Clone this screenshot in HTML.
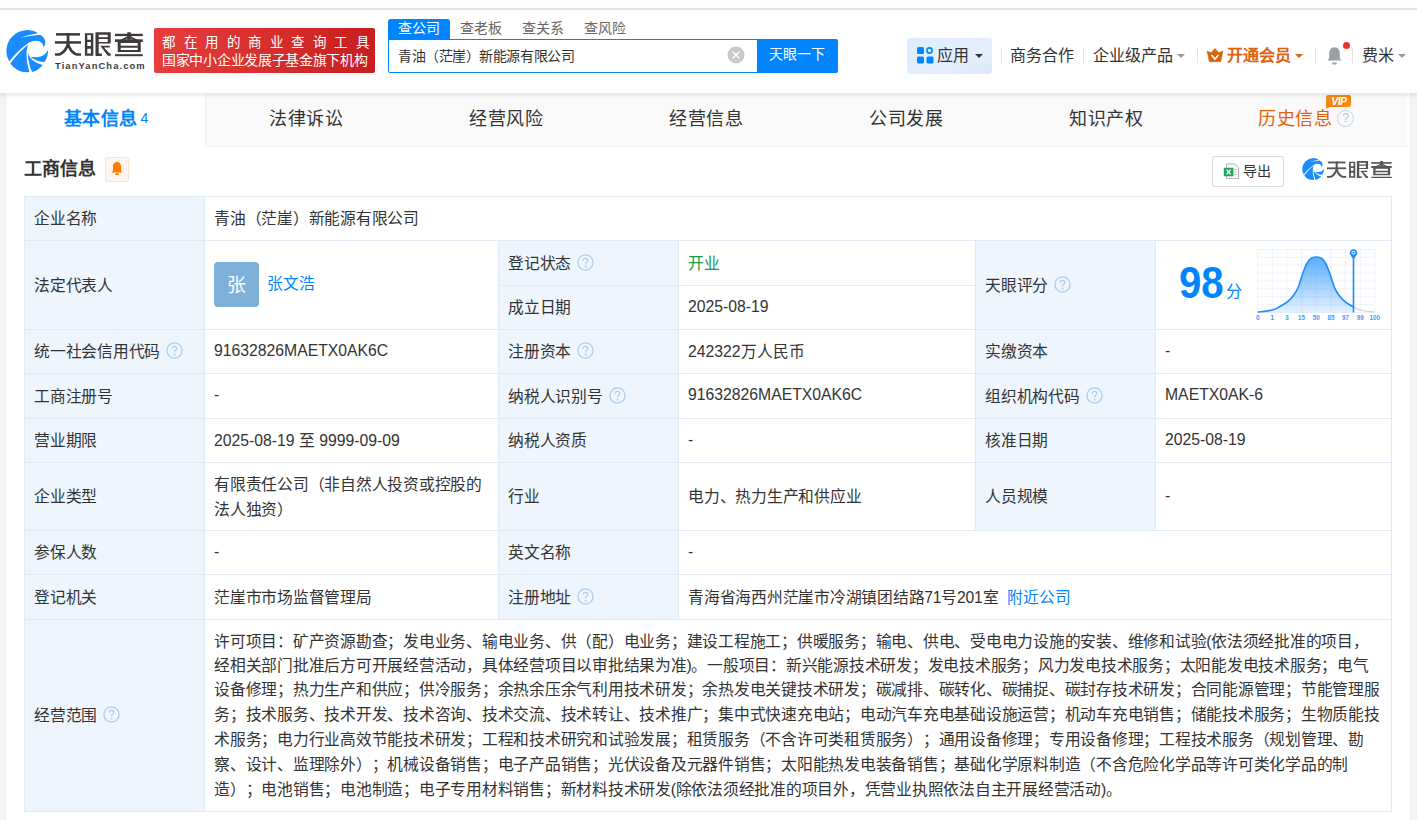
<!DOCTYPE html>
<html lang="zh-CN"><head><meta charset="utf-8">
<style>
*{margin:0;padding:0;box-sizing:border-box}
html,body{text-spacing-trim:space-all;width:1417px;height:820px;overflow:hidden;background:#f5f5f5;font-family:"Liberation Sans",sans-serif;color:#333}
.a{position:absolute;white-space:nowrap}
#top{position:absolute;left:0;top:0;width:1417px;height:8px;background:#fdfdfd}
#topline{position:absolute;left:0;top:8px;width:1417px;height:2px;background:#e1e1e1}
#hdr{position:absolute;left:0;top:10px;width:1417px;height:83px;background:#fff}
#panel{position:absolute;left:5px;top:93px;width:1406px;height:727px;background:#fff;border-right:1px solid #ececec;border-left:1px solid #ededed}
#tabs{position:absolute;left:6px;top:93px;width:1401px;height:54px;background:#f9f9f9;border-bottom:1px solid #f1f1f1}
.tab{position:absolute;top:0;height:53px;line-height:53px;font-size:18px;color:#333;text-align:center;width:200px;letter-spacing:.5px;text-indent:.5px}
.ht{font-size:14px;color:#666}
.sep{position:absolute;top:48px;width:1px;height:15px;background:#e3e3e3}
.nav{font-size:16px;color:#333;top:45px;line-height:22px;letter-spacing:0}
.caret{position:absolute;width:0;height:0;border-left:4px solid transparent;border-right:4px solid transparent;border-top:4px solid #999}
table{position:absolute;left:24px;top:196px;border-collapse:collapse;table-layout:fixed;width:1368px}
td{border:1px solid #e4ecf5;font-size:15.75px;padding:0 10px;vertical-align:middle;color:#333;white-space:nowrap}
td.l{background:#f0f6fc}
.q{display:inline-block;width:16px;height:16px;border:1px solid #bdd3ea;border-radius:50%;font-size:11px;line-height:14px;text-align:center;color:#bdd3ea;vertical-align:-2px;margin-left:5px}
.c{position:absolute;display:flex;align-items:center;padding-left:9px;padding-bottom:2px;border:1px solid #e1ebf6;font-size:15.75px;color:#333;white-space:nowrap;letter-spacing:-0.25px;font-weight:350}
.av{display:inline-block;width:45px;height:45px;border-radius:4px;background:#7eb0d8;color:#fff;font-size:19px;line-height:47px;text-align:center;letter-spacing:0;text-indent:-1px}
.n{letter-spacing:0}
.qs{margin-left:6px;flex:none;position:relative;top:0px}
</style></head><body>
<div id="top"></div><div id="topline"></div>
<div id="hdr"></div>
<svg class="a" style="left:4px;top:28px" width="46" height="46" viewBox="0 0 820 820"><path fill="#1a8cfe" d="M92 598 A375 375 0 0 1 612 92 Q450 112 288 172 Q460 138 632 120 C725 155 770 250 706 346 C700 280 660 230 570 228 C510 230 470 245 442 262 Q 240 400 92 598 Z"/>
<path fill="#1a8cfe" d="M112 632 Q 262 430 432 292 C388 400 388 560 455 786 A375 375 0 0 1 112 632 Z"/>
<path fill="#1a8cfe" d="M423 428 C432 590 462 700 500 784 A375 375 0 0 0 690 658 C600 640 520 600 472 532 C448 500 432 470 423 428 Z"/>
<path fill="#1a8cfe" d="M784 382 A375 375 0 0 1 724 604 C640 612 540 578 470 508 C560 532 660 522 720 472 C755 442 775 412 784 382 Z"/></svg>
<svg class="a" style="left:50px;top:26px" width="100" height="34" viewBox="50 26 100 34"><g fill="#3e3a3a">
<rect x="56" y="33.1" width="24" height="2.5"/><rect x="54.9" y="41.2" width="26.1" height="2.5"/><rect x="66.7" y="33.1" width="2.7" height="10"/>
<path d="M66.8 43 C65.5 48.5 62 52 58.8 53.2 H54.9 V55.7 H59.6 C64.5 54.5 68.2 49.5 69.4 43 Z"/>
<path d="M69.2 43 C70.5 48.5 74 52 77.2 53.2 H81 V55.7 H76.4 C71.5 54.5 67.8 49.5 66.6 43 Z"/>
<path fill-rule="evenodd" d="M84.9 33.2 H93.3 V55.7 H84.9 Z M87.3 35 V39.7 H90.9 V35 Z M87.3 42 V46 H90.9 V42 Z M87.3 48.7 V53.5 H90.9 V48.7 Z"/>
<path fill-rule="evenodd" d="M95.5 32.3 H110.7 V43.5 H98.7 V53.5 H101.9 V56 H95.5 Z M98.7 34.7 V37.2 H107.7 V34.7 Z M98.7 39 V42 H107.7 V39 Z"/>
<path d="M100.3 45.8 H109.8 V47.6 H104 L109.6 53.5 H110.7 V55.8 H107.8 Z"/>
<rect x="115" y="33.8" width="27.8" height="2.3"/><rect x="127.2" y="32.3" width="3.6" height="7.4"/>
<path d="M129 35.5 L119.5 40.2 L121.5 41.5 L129 37.6 L136.5 41.5 L138.5 40.2 Z"/>
<rect x="115" y="39.3" width="27.8" height="2.7"/>
<path fill-rule="evenodd" d="M117.7 42 H140.7 V52.1 H117.7 Z M120.7 43.1 V45.8 H137.7 V43.1 Z M120.7 47.8 V50.1 H137.7 V47.8 Z"/>
<rect x="115" y="54.2" width="27.8" height="2"/>
</g></svg>
<div class="a" style="left:55px;top:60px;font-size:9.4px;line-height:12px;font-weight:bold;color:#403c3d;letter-spacing:1.1px">TianYanCha.com</div>
<div class="a" style="left:154px;top:28px;width:221px;height:45px;border-radius:2px;background:linear-gradient(90deg,#e63e3e,#c81e1e)"></div>
<div class="a" style="left:162px;top:34px;font-size:13.5px;line-height:18px;color:#fff;letter-spacing:8.5px">都在用的商业查询工具</div>
<div class="a" style="left:162px;top:51px;font-size:14px;line-height:19px;color:#fff;letter-spacing:-0.3px;transform:scaleY(.94);transform-origin:0 50%">国家中小企业发展子基金旗下机构</div>
<div class="a" style="left:388px;top:19px;width:62px;height:21px;background:#0084ff;border-radius:3px 3px 0 0"></div>
<div class="a ht" style="left:398px;top:18px;line-height:20px;color:#fff;font-size:14px">查公司</div>
<div class="a ht" style="left:460px;top:18px;line-height:20px">查老板</div>
<div class="a ht" style="left:522px;top:18px;line-height:20px">查关系</div>
<div class="a ht" style="left:584px;top:18px;line-height:20px">查风险</div>
<div class="a" style="left:388px;top:39px;width:370px;height:34px;border:1px solid #0084ff;border-radius:0 0 0 2px;background:#fff"></div>
<div class="a" style="left:398px;top:46px;font-size:14px;letter-spacing:-0.45px;line-height:20px;color:#333">青油（茫崖）新能源有限公司</div>
<svg class="a" style="left:727px;top:46px" width="18" height="18" viewBox="0 0 18 18"><circle cx="9" cy="9" r="8.5" fill="#c9c9c9"/><path d="M5.8 5.8 L12.2 12.2 M12.2 5.8 L5.8 12.2" stroke="#fff" stroke-width="1.6"/></svg>
<div class="a" style="left:757px;top:39px;width:81px;height:34px;background:#0084ff;border-radius:0 2px 2px 0"></div>
<div class="a" style="left:769px;top:44px;font-size:14px;line-height:20px;color:#fff">天眼一下</div>
<div class="a" style="left:907px;top:38px;width:85px;height:36px;border-radius:3px;background:linear-gradient(160deg,#ddecfd,#e4effd 60%,#dae8fb)"></div>
<svg class="a" style="left:917px;top:47px" width="17" height="17" viewBox="0 0 17 17"><rect x="0" y="0" width="7" height="7" rx="1.5" fill="#0084ff"/><circle cx="12.5" cy="3.5" r="2.6" fill="none" stroke="#0084ff" stroke-width="1.6"/><rect x="0" y="9.5" width="7" height="7" rx="1.5" fill="#0084ff"/><rect x="9.5" y="9.5" width="7" height="7" rx="1.5" fill="#0084ff"/></svg>
<div class="a nav" style="left:937px">应用</div>
<div class="caret" style="left:975px;top:54px;border-top-color:#333"></div>
<div class="sep" style="left:1001px"></div>
<div class="a nav" style="left:1010px">商务合作</div>
<div class="sep" style="left:1083px"></div>
<div class="a nav" style="left:1093px">企业级产品</div>
<div class="caret" style="left:1177px;top:54px"></div>
<div class="sep" style="left:1197px"></div>
<svg class="a" style="left:1206px;top:47px" width="18" height="16" viewBox="0 0 18 16"><path d="M8.9 1.5 L12.9 5.7 L16.9 4.1 L14.8 14.2 Q14.7 14.7 14.2 14.7 L3.8 14.7 Q3.3 14.7 3.2 14.2 L1.1 4.1 L5.1 5.7 Z" fill="#d9650a" stroke="#d9650a" stroke-width=".6" stroke-linejoin="round"/><path d="M5.5 8.1 L8.9 12.1 L12.5 8.1" stroke="#fff" stroke-width="1.5" fill="none"/></svg>
<div class="a nav" style="left:1227px;color:#e0620d;font-weight:bold">开通会员</div>
<div class="caret" style="left:1295px;top:54px;border-top-color:#e0620d"></div>
<div class="sep" style="left:1315px"></div>
<svg class="a" style="left:1325px;top:46px" width="19" height="20" viewBox="0 0 19 20"><path d="M9.5 1.2 C5.6 1.2 4.2 4.4 4.2 8 L4.2 12.6 L2.4 14.6 L16.6 14.6 L14.8 12.6 L14.8 8 C14.8 4.4 13.4 1.2 9.5 1.2 Z" fill="#9b9ea3"/><rect x="7.2" y="16.4" width="4.6" height="2" rx="1" fill="#9b9ea3"/></svg>
<div class="a" style="left:1343px;top:42px;width:7px;height:7px;border-radius:50%;background:#f0302e"></div>
<div class="sep" style="left:1352px"></div>
<div class="a nav" style="left:1362px">费米</div>
<div class="caret" style="left:1398px;top:54px"></div>
<div id="panel"></div>
<div id="tabs"></div>
<div class="a" style="left:6px;top:93px;width:199px;height:54px;background:#fff"></div>
<div class="a tab" style="left:6px;top:93px;color:#0084ff;font-weight:bold">基本信息<span style="font-weight:normal;font-size:14px;margin-left:3px;position:relative;top:-2px">4</span></div>
<div class="a tab" style="left:206px;top:93px">法律诉讼</div>
<div class="a tab" style="left:406px;top:93px">经营风险</div>
<div class="a tab" style="left:606px;top:93px">经营信息</div>
<div class="a tab" style="left:806px;top:93px">公司发展</div>
<div class="a tab" style="left:1006px;top:93px">知识产权</div>
<div class="a tab" style="left:1206px;top:93px;color:#e0620d">历史信息<span class="q" style="width:17px;height:17px;border:1.8px solid #c9d0d8;color:#b8c0c8;font-size:12.5px;line-height:14px;vertical-align:3px;margin-left:5px">?</span></div>
<svg class="a" style="left:1326px;top:95px" width="26" height="15" viewBox="0 0 26 15"><defs><linearGradient id="vg" x1="0" y1="0" x2="1" y2="1"><stop offset="0" stop-color="#f39018"/><stop offset=".6" stop-color="#f77f08"/><stop offset="1" stop-color="#fb9a2a"/></linearGradient></defs><path d="M2 0 H23 Q25 0 25 2 V10 Q25 12 23 12 H3.5 L0.4 14 L0 11 V2 Q0 0 2 0 Z" fill="url(#vg)"/><text x="12.8" y="10.2" font-size="10.5" font-weight="bold" font-style="italic" fill="#fff" text-anchor="middle" font-family="Liberation Sans" letter-spacing="-0.6">VIP</text></svg>
<div class="a" style="left:205px;top:93px;width:1px;height:54px;background:#eeeeee"></div>
<div class="a" style="left:0;top:93px;width:1417px;height:6px;background:linear-gradient(rgba(0,0,0,.075),rgba(0,0,0,0))"></div>
<div class="a" style="left:24px;top:156px;font-size:18px;line-height:26px;font-weight:bold;color:#333">工商信息</div>
<div class="a" style="left:105px;top:157px;width:24px;height:25px;border:1px solid #fde3cc;background:#fff5ec;border-radius:2px"></div>
<svg class="a" style="left:110px;top:161px" width="14" height="15" viewBox="0 0 14 15"><path d="M7 1 C4 1 3 3.4 3 6 L3 9.5 L1.5 11.5 L12.5 11.5 L11 9.5 L11 6 C11 3.4 10 1 7 1 Z" fill="#ff7a00"/><rect x="5.2" y="12.3" width="3.6" height="1.8" rx=".9" fill="#ff7a00"/></svg>
<div class="a" style="left:1212px;top:156px;width:72px;height:31px;border:1px solid #dcdcdc;border-radius:2px;background:#fff"></div>
<svg class="a" style="left:1223px;top:163px" width="17" height="17" viewBox="0 0 17 17"><path d="M3.5 1 H12 L15.5 4.5 V15.5 H3.5 Z" fill="#fafafa" stroke="#b5b5b5" stroke-width="1"/><path d="M11 6.5 H14 M11 9 H14 M11 11.5 H14" stroke="#c8c8c8" stroke-width="1"/><rect x="0.8" y="4.8" width="9.6" height="8.4" rx=".6" fill="#21a366"/><path d="M3.6 6.6 L7.6 11.4 M7.6 6.6 L3.6 11.4" stroke="#fff" stroke-width="1.4"/></svg>
<div class="a" style="left:1243px;top:161px;font-size:14px;line-height:20px;color:#333">导出</div>
<svg class="a" style="left:1301px;top:157px" width="24" height="24" viewBox="0 0 820 820"><path fill="#1a8cfe" d="M92 598 A375 375 0 0 1 612 92 Q450 112 288 172 Q460 138 632 120 C725 155 770 250 706 346 C700 280 660 230 570 228 C510 230 470 245 442 262 Q 240 400 92 598 Z"/>
<path fill="#1a8cfe" d="M112 632 Q 262 430 432 292 C388 400 388 560 455 786 A375 375 0 0 1 112 632 Z"/>
<path fill="#1a8cfe" d="M423 428 C432 590 462 700 500 784 A375 375 0 0 0 690 658 C600 640 520 600 472 532 C448 500 432 470 423 428 Z"/>
<path fill="#1a8cfe" d="M784 382 A375 375 0 0 1 724 604 C640 612 540 578 470 508 C560 532 660 522 720 472 C755 442 775 412 784 382 Z"/></svg>
<svg class="a" style="left:1327px;top:161.3px" width="64.7" height="17.2" viewBox="54.9 32.3 87.9 23.9" preserveAspectRatio="none"><g fill="#545456">
<rect x="56" y="33.1" width="24" height="2.5"/><rect x="54.9" y="41.2" width="26.1" height="2.5"/><rect x="66.7" y="33.1" width="2.7" height="10"/>
<path d="M66.8 43 C65.5 48.5 62 52 58.8 53.2 H54.9 V55.7 H59.6 C64.5 54.5 68.2 49.5 69.4 43 Z"/>
<path d="M69.2 43 C70.5 48.5 74 52 77.2 53.2 H81 V55.7 H76.4 C71.5 54.5 67.8 49.5 66.6 43 Z"/>
<path fill-rule="evenodd" d="M84.9 33.2 H93.3 V55.7 H84.9 Z M87.3 35 V39.7 H90.9 V35 Z M87.3 42 V46 H90.9 V42 Z M87.3 48.7 V53.5 H90.9 V48.7 Z"/>
<path fill-rule="evenodd" d="M95.5 32.3 H110.7 V43.5 H98.7 V53.5 H101.9 V56 H95.5 Z M98.7 34.7 V37.2 H107.7 V34.7 Z M98.7 39 V42 H107.7 V39 Z"/>
<path d="M100.3 45.8 H109.8 V47.6 H104 L109.6 53.5 H110.7 V55.8 H107.8 Z"/>
<rect x="115" y="33.8" width="27.8" height="2.3"/><rect x="127.2" y="32.3" width="3.6" height="7.4"/>
<path d="M129 35.5 L119.5 40.2 L121.5 41.5 L129 37.6 L136.5 41.5 L138.5 40.2 Z"/>
<rect x="115" y="39.3" width="27.8" height="2.7"/>
<path fill-rule="evenodd" d="M117.7 42 H140.7 V52.1 H117.7 Z M120.7 43.1 V45.8 H137.7 V43.1 Z M120.7 47.8 V50.1 H137.7 V47.8 Z"/>
<rect x="115" y="54.2" width="27.8" height="2"/>
</g></svg>
<div id="tbl">
<div class="c" style="left:24px;top:196px;width:181px;height:45px;background:#eef5fc;">企业名称</div>
<div class="c" style="left:204px;top:196px;width:1188px;height:45px;background:#fff;">青油（茫崖）新能源有限公司</div>
<div class="c" style="left:24px;top:240px;width:181px;height:90px;background:#eef5fc;">法定代表人</div>
<div class="c" style="left:204px;top:240px;width:295px;height:90px;background:#fff;"><span class="av">张</span><span style="color:#0084ff;margin-left:8px;position:relative;top:-2px">张文浩</span></div>
<div class="c" style="left:498px;top:240px;width:181px;height:46px;background:#eef5fc;">登记状态<svg class="qs" width="17" height="17" viewBox="0 0 17 17"><circle cx="8.5" cy="8.5" r="7.6" fill="none" stroke="#a9cdee" stroke-width="1.3"/><path d="M6.2 6.7 C6.2 5.2 7.2 4.3 8.5 4.3 C9.8 4.3 10.8 5.2 10.8 6.4 C10.8 8 8.6 8.2 8.6 10 V10.6" fill="none" stroke="#a9cdee" stroke-width="1.2"/><circle cx="8.6" cy="12.7" r=".85" fill="#a9cdee"/></svg></div>
<div class="c" style="left:678px;top:240px;width:298px;height:46px;background:#fff;"><span style="color:#139a4a">开业</span></div>
<div class="c" style="left:498px;top:285px;width:181px;height:45px;background:#eef5fc;">成立日期</div>
<div class="c" style="left:678px;top:285px;width:298px;height:45px;background:#fff;"><span class="n">2025-08-19</span></div>
<div class="c" style="left:975px;top:240px;width:181px;height:90px;background:#eef5fc;">天眼评分<svg class="qs" width="17" height="17" viewBox="0 0 17 17"><circle cx="8.5" cy="8.5" r="7.6" fill="none" stroke="#a9cdee" stroke-width="1.3"/><path d="M6.2 6.7 C6.2 5.2 7.2 4.3 8.5 4.3 C9.8 4.3 10.8 5.2 10.8 6.4 C10.8 8 8.6 8.2 8.6 10 V10.6" fill="none" stroke="#a9cdee" stroke-width="1.2"/><circle cx="8.6" cy="12.7" r=".85" fill="#a9cdee"/></svg></div>
<div class="c" style="left:1155px;top:240px;width:237px;height:90px;background:#fff;"></div>
<div class="c" style="left:24px;top:329px;width:181px;height:45px;background:#eef5fc;">统一社会信用代码<svg class="qs" width="17" height="17" viewBox="0 0 17 17"><circle cx="8.5" cy="8.5" r="7.6" fill="none" stroke="#a9cdee" stroke-width="1.3"/><path d="M6.2 6.7 C6.2 5.2 7.2 4.3 8.5 4.3 C9.8 4.3 10.8 5.2 10.8 6.4 C10.8 8 8.6 8.2 8.6 10 V10.6" fill="none" stroke="#a9cdee" stroke-width="1.2"/><circle cx="8.6" cy="12.7" r=".85" fill="#a9cdee"/></svg></div>
<div class="c" style="left:204px;top:329px;width:295px;height:45px;background:#fff;"><span class="n">91632826MAETX0AK6C</span></div>
<div class="c" style="left:498px;top:329px;width:181px;height:45px;background:#eef5fc;">注册资本<svg class="qs" width="17" height="17" viewBox="0 0 17 17"><circle cx="8.5" cy="8.5" r="7.6" fill="none" stroke="#a9cdee" stroke-width="1.3"/><path d="M6.2 6.7 C6.2 5.2 7.2 4.3 8.5 4.3 C9.8 4.3 10.8 5.2 10.8 6.4 C10.8 8 8.6 8.2 8.6 10 V10.6" fill="none" stroke="#a9cdee" stroke-width="1.2"/><circle cx="8.6" cy="12.7" r=".85" fill="#a9cdee"/></svg></div>
<div class="c" style="left:678px;top:329px;width:298px;height:45px;background:#fff;"><span class="n">242322万人民币</span></div>
<div class="c" style="left:975px;top:329px;width:181px;height:45px;background:#eef5fc;">实缴资本</div>
<div class="c" style="left:1155px;top:329px;width:237px;height:45px;background:#fff;">-</div>
<div class="c" style="left:24px;top:373px;width:181px;height:46px;background:#eef5fc;">工商注册号</div>
<div class="c" style="left:204px;top:373px;width:295px;height:46px;background:#fff;">-</div>
<div class="c" style="left:498px;top:373px;width:181px;height:46px;background:#eef5fc;">纳税人识别号<svg class="qs" width="17" height="17" viewBox="0 0 17 17"><circle cx="8.5" cy="8.5" r="7.6" fill="none" stroke="#a9cdee" stroke-width="1.3"/><path d="M6.2 6.7 C6.2 5.2 7.2 4.3 8.5 4.3 C9.8 4.3 10.8 5.2 10.8 6.4 C10.8 8 8.6 8.2 8.6 10 V10.6" fill="none" stroke="#a9cdee" stroke-width="1.2"/><circle cx="8.6" cy="12.7" r=".85" fill="#a9cdee"/></svg></div>
<div class="c" style="left:678px;top:373px;width:298px;height:46px;background:#fff;"><span class="n">91632826MAETX0AK6C</span></div>
<div class="c" style="left:975px;top:373px;width:181px;height:46px;background:#eef5fc;">组织机构代码<svg class="qs" width="17" height="17" viewBox="0 0 17 17"><circle cx="8.5" cy="8.5" r="7.6" fill="none" stroke="#a9cdee" stroke-width="1.3"/><path d="M6.2 6.7 C6.2 5.2 7.2 4.3 8.5 4.3 C9.8 4.3 10.8 5.2 10.8 6.4 C10.8 8 8.6 8.2 8.6 10 V10.6" fill="none" stroke="#a9cdee" stroke-width="1.2"/><circle cx="8.6" cy="12.7" r=".85" fill="#a9cdee"/></svg></div>
<div class="c" style="left:1155px;top:373px;width:237px;height:46px;background:#fff;"><span class="n">MAETX0AK-6</span></div>
<div class="c" style="left:24px;top:418px;width:181px;height:45px;background:#eef5fc;">营业期限</div>
<div class="c" style="left:204px;top:418px;width:295px;height:45px;background:#fff;"><span class="n">2025-08-19 至 9999-09-09</span></div>
<div class="c" style="left:498px;top:418px;width:181px;height:45px;background:#eef5fc;">纳税人资质</div>
<div class="c" style="left:678px;top:418px;width:298px;height:45px;background:#fff;">-</div>
<div class="c" style="left:975px;top:418px;width:181px;height:45px;background:#eef5fc;">核准日期</div>
<div class="c" style="left:1155px;top:418px;width:237px;height:45px;background:#fff;"><span class="n">2025-08-19</span></div>
<div class="c" style="left:24px;top:462px;width:181px;height:69px;background:#eef5fc;">企业类型</div>
<div class="c" style="left:204px;top:462px;width:295px;height:69px;background:#fff;"><div style="line-height:24.65px;position:relative;top:2px">有限责任公司（非自然人投资或控股的<br>法人独资）</div></div>
<div class="c" style="left:498px;top:462px;width:181px;height:69px;background:#eef5fc;">行业</div>
<div class="c" style="left:678px;top:462px;width:298px;height:69px;background:#fff;">电力、热力生产和供应业</div>
<div class="c" style="left:975px;top:462px;width:181px;height:69px;background:#eef5fc;">人员规模</div>
<div class="c" style="left:1155px;top:462px;width:237px;height:69px;background:#fff;">-</div>
<div class="c" style="left:24px;top:530px;width:181px;height:45px;background:#eef5fc;">参保人数</div>
<div class="c" style="left:204px;top:530px;width:295px;height:45px;background:#fff;">-</div>
<div class="c" style="left:498px;top:530px;width:181px;height:45px;background:#eef5fc;">英文名称</div>
<div class="c" style="left:678px;top:530px;width:714px;height:45px;background:#fff;">-</div>
<div class="c" style="left:24px;top:574px;width:181px;height:46px;background:#eef5fc;">登记机关</div>
<div class="c" style="left:204px;top:574px;width:295px;height:46px;background:#fff;">茫崖市市场监督管理局</div>
<div class="c" style="left:498px;top:574px;width:181px;height:46px;background:#eef5fc;">注册地址<svg class="qs" width="17" height="17" viewBox="0 0 17 17"><circle cx="8.5" cy="8.5" r="7.6" fill="none" stroke="#a9cdee" stroke-width="1.3"/><path d="M6.2 6.7 C6.2 5.2 7.2 4.3 8.5 4.3 C9.8 4.3 10.8 5.2 10.8 6.4 C10.8 8 8.6 8.2 8.6 10 V10.6" fill="none" stroke="#a9cdee" stroke-width="1.2"/><circle cx="8.6" cy="12.7" r=".85" fill="#a9cdee"/></svg></div>
<div class="c" style="left:678px;top:574px;width:714px;height:46px;background:#fff;">青海省海西州茫崖市冷湖镇团结路71号201室<span style="color:#0084ff;margin-left:9px">附近公司</span></div>
<div class="c" style="left:24px;top:619px;width:181px;height:193px;background:#eef5fc;">经营范围<svg class="qs" width="17" height="17" viewBox="0 0 17 17"><circle cx="8.5" cy="8.5" r="7.6" fill="none" stroke="#a9cdee" stroke-width="1.3"/><path d="M6.2 6.7 C6.2 5.2 7.2 4.3 8.5 4.3 C9.8 4.3 10.8 5.2 10.8 6.4 C10.8 8 8.6 8.2 8.6 10 V10.6" fill="none" stroke="#a9cdee" stroke-width="1.2"/><circle cx="8.6" cy="12.7" r=".85" fill="#a9cdee"/></svg></div>
<div class="c" style="left:204px;top:619px;width:1188px;height:193px;background:#fff;"><div style="line-height:24.65px;position:relative;top:2px"><div style="position:relative;top:0px">许可项目：矿产资源勘查；发电业务、输电业务、供（配）电业务；建设工程施工；供暖服务；输电、供电、受电电力设施的安装、维修和试验(依法须经批准的项目，</div><div style="position:relative;top:-1px">经相关部门批准后方可开展经营活动，具体经营项目以审批结果为准)。一般项目：新兴能源技术研发；发电技术服务；风力发电技术服务；太阳能发电技术服务；电气</div><div style="position:relative;top:-2px">设备修理；热力生产和供应；供冷服务；余热余压余气利用技术研发；余热发电关键技术研发；碳减排、碳转化、碳捕捉、碳封存技术研发；合同能源管理；节能管理服</div><div style="position:relative;top:-1px">务；技术服务、技术开发、技术咨询、技术交流、技术转让、技术推广；集中式快速充电站；电动汽车充电基础设施运营；机动车充电销售；储能技术服务；生物质能技</div><div style="position:relative;top:-1px">术服务；电力行业高效节能技术研发；工程和技术研究和试验发展；租赁服务（不含许可类租赁服务）；通用设备修理；专用设备修理；工程技术服务（规划管理、勘</div><div style="position:relative;top:0px">察、设计、监理除外）；机械设备销售；电子产品销售；光伏设备及元器件销售；太阳能热发电装备销售；基础化学原料制造（不含危险化学品等许可类化学品的制</div><div style="position:relative;top:0px">造）；电池销售；电池制造；电子专用材料销售；新材料技术研发(除依法须经批准的项目外，凭营业执照依法自主开展经营活动)。</div></div></div>
</div>
<svg class="a" style="left:0;top:0" width="1417" height="820" viewBox="0 0 1417 820">
<defs><linearGradient id="gf" x1="0" y1="0" x2="0" y2="1"><stop offset="0" stop-color="#4aa3ff" stop-opacity=".9"/><stop offset="1" stop-color="#4aa3ff" stop-opacity=".15"/></linearGradient></defs>
<path d="M1257.70 249.40 V312.50 M1272.34 249.40 V312.50 M1286.97 249.40 V312.50 M1301.61 249.40 V312.50 M1316.25 249.40 V312.50 M1330.89 249.40 V312.50 M1345.53 249.40 V312.50 M1360.16 249.40 V312.50 M1374.80 249.40 V312.50 M1257.70 249.40 H1374.80 M1257.70 257.29 H1374.80 M1257.70 265.18 H1374.80 M1257.70 273.06 H1374.80 M1257.70 280.95 H1374.80 M1257.70 288.84 H1374.80 M1257.70 296.73 H1374.80 M1257.70 304.61 H1374.80 M1257.70 312.50 H1374.80" stroke="#edf3fa" stroke-width="1" fill="none"/>
<clipPath id="cl"><rect x="1250" y="240" width="103.5" height="80"/></clipPath><clipPath id="cr"><rect x="1353.5" y="240" width="40" height="80"/></clipPath>
<path d="M1257.70 312.13 C1260.11 311.79 1268.52 310.98 1272.16 310.09 C1275.79 309.21 1276.99 308.19 1279.51 306.82 C1282.03 305.46 1284.96 303.83 1287.27 301.92 C1289.59 300.02 1291.70 297.56 1293.40 295.39 C1295.10 293.21 1296.39 291.03 1297.48 288.85 C1298.57 286.67 1299.19 284.49 1299.93 282.31 C1300.68 280.14 1301.30 277.82 1301.98 275.78 C1302.66 273.74 1303.20 272.10 1304.02 270.06 C1304.84 268.02 1305.79 265.43 1306.88 263.52 C1307.97 261.62 1308.99 259.71 1310.56 258.62 C1312.12 257.53 1314.37 256.99 1316.27 256.99 C1318.18 256.99 1320.43 257.53 1321.99 258.62 C1323.56 259.71 1324.58 261.62 1325.67 263.52 C1326.76 265.43 1327.71 268.02 1328.53 270.06 C1329.35 272.10 1329.89 273.74 1330.57 275.78 C1331.25 277.82 1331.87 280.14 1332.61 282.31 C1333.36 284.49 1333.98 286.67 1335.07 288.85 C1336.15 291.03 1337.45 293.21 1339.15 295.39 C1340.85 297.56 1342.96 300.02 1345.28 301.92 C1347.59 303.83 1350.52 305.46 1353.04 306.82 C1355.56 308.19 1356.77 309.21 1360.39 310.09 C1364.02 310.98 1372.40 311.79 1374.80 312.13 L1374.8 312.5 L1257.7 312.5 Z" fill="url(#gf)" clip-path="url(#cl)"/>
<path d="M1257.70 312.13 C1260.11 311.79 1268.52 310.98 1272.16 310.09 C1275.79 309.21 1276.99 308.19 1279.51 306.82 C1282.03 305.46 1284.96 303.83 1287.27 301.92 C1289.59 300.02 1291.70 297.56 1293.40 295.39 C1295.10 293.21 1296.39 291.03 1297.48 288.85 C1298.57 286.67 1299.19 284.49 1299.93 282.31 C1300.68 280.14 1301.30 277.82 1301.98 275.78 C1302.66 273.74 1303.20 272.10 1304.02 270.06 C1304.84 268.02 1305.79 265.43 1306.88 263.52 C1307.97 261.62 1308.99 259.71 1310.56 258.62 C1312.12 257.53 1314.37 256.99 1316.27 256.99 C1318.18 256.99 1320.43 257.53 1321.99 258.62 C1323.56 259.71 1324.58 261.62 1325.67 263.52 C1326.76 265.43 1327.71 268.02 1328.53 270.06 C1329.35 272.10 1329.89 273.74 1330.57 275.78 C1331.25 277.82 1331.87 280.14 1332.61 282.31 C1333.36 284.49 1333.98 286.67 1335.07 288.85 C1336.15 291.03 1337.45 293.21 1339.15 295.39 C1340.85 297.56 1342.96 300.02 1345.28 301.92 C1347.59 303.83 1350.52 305.46 1353.04 306.82 C1355.56 308.19 1356.77 309.21 1360.39 310.09 C1364.02 310.98 1372.40 311.79 1374.80 312.13" stroke="#1a8cff" stroke-width="1.6" fill="none" clip-path="url(#cl)"/>
<path d="M1257.70 312.13 C1260.11 311.79 1268.52 310.98 1272.16 310.09 C1275.79 309.21 1276.99 308.19 1279.51 306.82 C1282.03 305.46 1284.96 303.83 1287.27 301.92 C1289.59 300.02 1291.70 297.56 1293.40 295.39 C1295.10 293.21 1296.39 291.03 1297.48 288.85 C1298.57 286.67 1299.19 284.49 1299.93 282.31 C1300.68 280.14 1301.30 277.82 1301.98 275.78 C1302.66 273.74 1303.20 272.10 1304.02 270.06 C1304.84 268.02 1305.79 265.43 1306.88 263.52 C1307.97 261.62 1308.99 259.71 1310.56 258.62 C1312.12 257.53 1314.37 256.99 1316.27 256.99 C1318.18 256.99 1320.43 257.53 1321.99 258.62 C1323.56 259.71 1324.58 261.62 1325.67 263.52 C1326.76 265.43 1327.71 268.02 1328.53 270.06 C1329.35 272.10 1329.89 273.74 1330.57 275.78 C1331.25 277.82 1331.87 280.14 1332.61 282.31 C1333.36 284.49 1333.98 286.67 1335.07 288.85 C1336.15 291.03 1337.45 293.21 1339.15 295.39 C1340.85 297.56 1342.96 300.02 1345.28 301.92 C1347.59 303.83 1350.52 305.46 1353.04 306.82 C1355.56 308.19 1356.77 309.21 1360.39 310.09 C1364.02 310.98 1372.40 311.79 1374.80 312.13" stroke="#d4d9df" stroke-width="1.4" fill="none" clip-path="url(#cr)"/>
<path d="M1353.5 256 V312.5" stroke="#1a8cff" stroke-width="1.6"/>
<path d="M1349.8 254 A3.8 3.8 0 1 1 1357.2 254 L1353.5 259.5 Z" fill="#1a8cff"/>
<circle cx="1353.5" cy="252.7" r="1.5" fill="none" stroke="#fff" stroke-width="1"/>
<g font-family="Liberation Sans" font-size="6.3" font-weight="bold" fill="#3d9bff"><text y="320.3" x="1257.70" text-anchor="middle">0</text><text y="320.3" x="1272.34" text-anchor="middle">1</text><text y="320.3" x="1286.97" text-anchor="middle">3</text><text y="320.3" x="1301.61" text-anchor="middle">15</text><text y="320.3" x="1316.25" text-anchor="middle">50</text><text y="320.3" x="1330.89" text-anchor="middle">85</text><text y="320.3" x="1345.53" text-anchor="middle">97</text><text y="320.3" x="1360.16" text-anchor="middle">99</text><text y="320.3" x="1374.80" text-anchor="middle">100</text></g>
</svg>
<div class="a" style="left:1179px;top:259px;font-size:44px;line-height:48px;font-weight:bold;color:#0084ff;transform:scaleX(.91);transform-origin:0 0">98</div>
<div class="a" style="left:1226px;top:282px;font-size:16px;line-height:20px;color:#0084ff">分</div>
</body></html>
